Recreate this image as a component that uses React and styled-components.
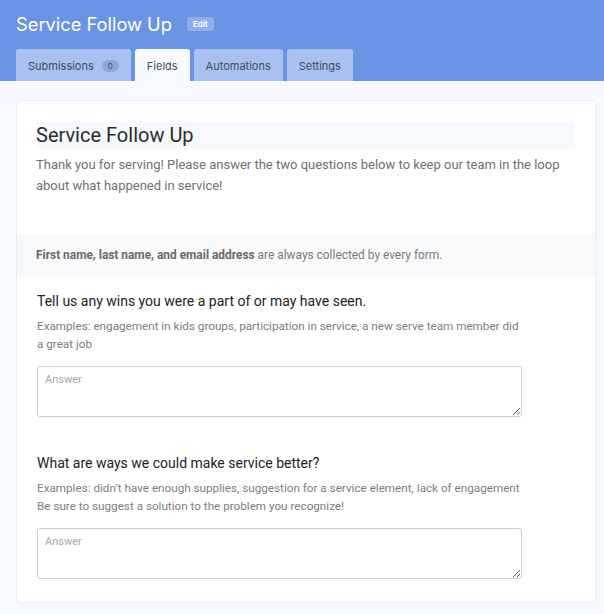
import React from 'react';
import styled, { createGlobalStyle } from 'styled-components';

const GlobalStyle = createGlobalStyle`
  body {
    margin: 0;
    background: #f5f9ff;
    font-family: Roboto, "Liberation Sans", sans-serif;
  }
`;

const Header = styled.header`
  background: #6b93e3;
  padding: 11px 16px 0;
`;

const TitleRow = styled.div`
  display: flex;
  align-items: center;
  gap: 15px;
  height: 26px;
`;

const PageTitle = styled.h1`
  margin: 0;
  font-family: Inter, sans-serif;
  font-size: 18.3px;
  font-weight: 400;
  color: #fff;
`;

const EditBadge = styled.span`
  font-family: Inter, sans-serif;
  font-size: 8px;
  font-weight: 600;
  color: #fff;
  background: rgba(255, 255, 255, 0.25);
  border-radius: 3px;
  padding: 2px 6px;
`;

const Tabs = styled.nav`
  display: flex;
  gap: 4px;
  margin-top: 12px;
`;

const Tab = styled.div`
  display: flex;
  align-items: center;
  gap: 8px;
  height: 32px;
  padding: 2px 12px 0;
  box-sizing: border-box;
  border-radius: 3px 3px 0 0;
  background: ${p => (p.active ? '#f7faff' : '#a9c1f1')};
  color: #3f4a5c;
  font-family: Inter, sans-serif;
  font-size: 11px;
`;

const Count = styled.span`
  font-size: 8px;
  background: #8fa9dc;
  color: #3f4a5c;
  border-radius: 6px;
  padding: 1px 6px;
`;

const Page = styled.main`
  padding: 19px 8px 13px 16px;
`;

const Card = styled.section`
  background: #fff;
  border: 1px solid #e6edf8;
  border-radius: 4px;
  padding: 20px 0 23px;
`;

const Intro = styled.div`
  padding: 0 20px 0 19px;
`;

const FormTitle = styled.h2`
  margin: 0;
  background: #f5f8fd;
  font-size: 20px;
  font-weight: 400;
  color: #2b2b2b;
  line-height: 28px;
`;

const Description = styled.p`
  margin: 5px 0 0;
  font-size: 13px;
  line-height: 21px;
  color: #707070;
`;

const Notice = styled.div`
  margin-top: 38px;
  background: #f8f9fb;
  padding: 14px 20px 15px 19px;
  font-size: 11.9px;
  line-height: 14px;
  color: #7a7a7a;

  b {
    color: #6a6a6a;
    font-weight: 700;
  }
`;

const Field = styled.div`
  padding: 15px 20px 0 20px;
  & + & {
    padding-top: 37px;
  }
`;

const Question = styled.h3`
  margin: 0;
  font-size: 14px;
  font-weight: 400;
  color: #222;
  line-height: 18px;
`;

const Hint = styled.p`
  margin: 7px 0 0;
  font-size: 11.7px;
  line-height: 18px;
  color: #7d7d7d;
  max-width: 486px;
`;

const Answer = styled.textarea`
  display: block;
  box-sizing: border-box;
  margin-top: 13px;
  width: 485px;
  height: 51px;
  border: 1px solid #c3cde2;
  border-radius: 3px;
  padding: 6px 7px;
  font-family: Roboto, sans-serif;
  font-size: 11px;
  resize: vertical;

  &::placeholder {
    color: #a8a8a8;
  }
`;

const fields = [
  {
    q: 'Tell us any wins you were a part of or may have seen.',
    hint: ['Examples: engagement in kids groups, participation in service, a new serve team member did a great job'],
  },
  {
    q: 'What are ways we could make service better?',
    hint: [
      'Examples: didn\u2019t have enough supplies, suggestion for a service element, lack of engagement',
      'Be sure to suggest a solution to the problem you recognize!',
    ],
  },
];

export default function App() {
  return (
    <>
      <GlobalStyle />
      <Header>
        <TitleRow>
          <PageTitle>Service Follow Up</PageTitle>
          <EditBadge>Edit</EditBadge>
        </TitleRow>
        <Tabs>
          <Tab>
            Submissions <Count>0</Count>
          </Tab>
          <Tab active>Fields</Tab>
          <Tab>Automations</Tab>
          <Tab>Settings</Tab>
        </Tabs>
      </Header>
      <Page>
        <Card>
          <Intro>
            <FormTitle>Service Follow Up</FormTitle>
            <Description>
              Thank you for serving! Please answer the two questions below to keep our team in the loop
              about what happened in service!
            </Description>
          </Intro>
          <Notice>
            <b>First name, last name, and email address</b> are always collected by every form.
          </Notice>
          {fields.map(f => (
            <Field key={f.q}>
              <Question>{f.q}</Question>
              <Hint>
                {f.hint.map((h, i) => (
                  <React.Fragment key={i}>
                    {i > 0 && <br />}
                    {h}
                  </React.Fragment>
                ))}
              </Hint>
              <Answer placeholder="Answer" />
            </Field>
          ))}
        </Card>
      </Page>
    </>
  );
}
